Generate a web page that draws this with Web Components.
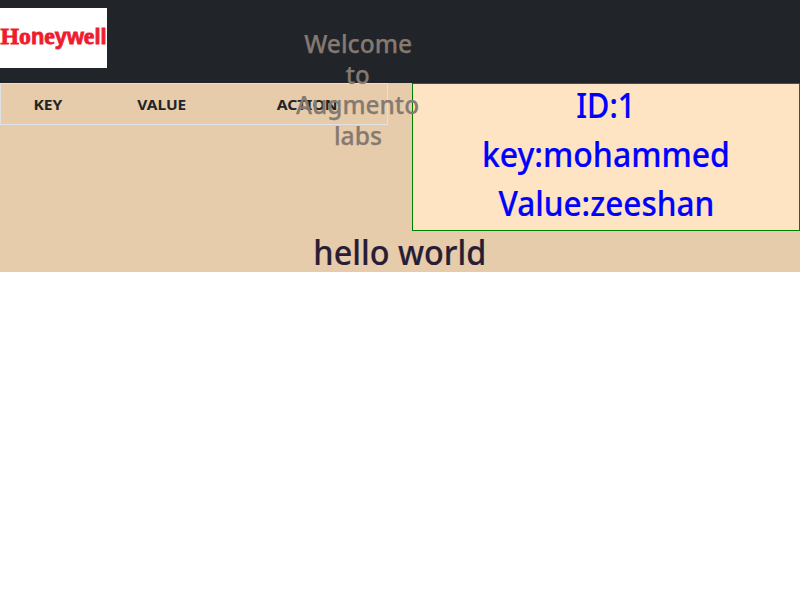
<!DOCTYPE html>
<html lang="en"><head><meta charset="utf-8"><title>Augmento labs</title>
<style>body{margin:0;background:#fff;color:#212529;font-family:"Noto Sans","Open Sans",sans-serif}</style></head>
<body><app-page></app-page>
<script>
// A single line of text condensed horizontally to a given width.
class FitText extends HTMLElement{
 connectedCallback(){
  const r=this.attachShadow({mode:'open'});
  r.innerHTML='<style>:host{display:flex;justify-content:center;white-space:nowrap}span{display:block;flex:none}</style><span><slot></slot></span>';
  const s=r.querySelector('span');
  s.style.transform='scaleX('+(+this.getAttribute('width')/s.getBoundingClientRect().width)+')';
 }}
class BrandLogo extends HTMLElement{
 connectedCallback(){this.attachShadow({mode:'open'}).innerHTML=`<style>:host{display:block;width:107px;height:60px;background:#fff}svg{display:block}.s{font-family:"Liberation Sans",sans-serif;font-size:21.5px}</style>
 <svg width="107" height="60" viewBox="0 0 107 60"><text x="0.5" y="35.5" textLength="106" lengthAdjust="spacingAndGlyphs" font-family="Liberation Serif,serif" font-weight="700" font-size="23.5" fill="#ee1c2e" stroke="#ee1c2e" stroke-width=".8">Ho<tspan class="s">n</tspan>e<tspan class="s">yw</tspan>e<tspan class="s">ll</tspan></text></svg>`}}
class TopBar extends HTMLElement{
 connectedCallback(){this.attachShadow({mode:'open'}).innerHTML=`<style>:host{display:block;box-sizing:border-box;height:83px;padding-top:8px;background:#212529;position:relative}
 .welcome{position:absolute;z-index:2;left:296px;top:29px;width:124px;font-size:25.6px;line-height:30.72px;font-weight:500;color:#857970;-webkit-text-stroke:.25px #857970}</style>
 <brand-logo></brand-logo><div class="welcome"><fit-text width="108">Welcome</fit-text><fit-text width="24">to</fit-text><fit-text width="123">Augmento</fit-text><fit-text width="48">labs</fit-text></div>`}}
class DataTable extends HTMLElement{
 connectedCallback(){this.attachShadow({mode:'open'}).innerHTML=`<style>:host{display:grid;grid-template-columns:94px 133px 159px;box-sizing:border-box;width:388px;height:42px;border:1px solid #dee2e6;align-items:center;font-size:15px;line-height:24px;font-weight:700}</style>
 <fit-text width="29">KEY</fit-text><fit-text width="49">VALUE</fit-text><fit-text width="61">ACTION</fit-text>`}}
class DetailCard extends HTMLElement{
 connectedCallback(){this.attachShadow({mode:'open'}).innerHTML=`<style>:host{display:flex;flex-direction:column;gap:8px;box-sizing:border-box;width:388px;height:148.4px;padding-top:1px;border:1px solid green;background:#ffe4c4;color:#00f;font-size:34px;line-height:40.8px;font-weight:500;-webkit-text-stroke:.2px #00f}</style>
 <fit-text width="59">ID:1</fit-text><fit-text width="248">key:mohammed</fit-text><fit-text width="216">Value:zeeshan</fit-text>`}}
class AppPage extends HTMLElement{
 connectedCallback(){this.attachShadow({mode:'open'}).innerHTML=`<style>:host{display:block}main{background:#e6ccab;height:189px}.row{display:flex;justify-content:space-between;align-items:flex-start}
 .foot{font-size:34px;line-height:40.8px;padding-top:1px;font-weight:500;color:#291d35;-webkit-text-stroke:.2px #291d35}</style>
 <top-bar></top-bar><main><div class="row"><data-table></data-table><detail-card></detail-card></div><fit-text class="foot" width="173">hello world</fit-text></main>`}}
customElements.define('fit-text',FitText);customElements.define('brand-logo',BrandLogo);customElements.define('top-bar',TopBar);customElements.define('data-table',DataTable);customElements.define('detail-card',DetailCard);customElements.define('app-page',AppPage);
</script></body></html>
